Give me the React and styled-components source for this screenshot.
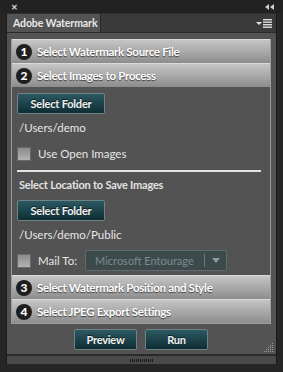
import React from "react";
import styled, { createGlobalStyle } from "styled-components";

const GlobalStyle = createGlobalStyle`
  html, body {
    margin: 0;
    padding: 0;
    background: #262626;
  }
  * {
    box-sizing: border-box;
  }
`;

const sections = [
  { num: 1, title: "Select Watermark Source File" },
  { num: 2, title: "Select Images to Process", open: true },
  { num: 3, title: "Select Watermark Position and Style" },
  { num: 4, title: "Select JPEG Export Settings" },
];

const App = () => {
  return (
    <StyledWindow>
      <GlobalStyle />
      <StyledTopBar>
        <StyledClose>✕</StyledClose>
        <svg width="9" height="6" viewBox="0 0 9 6">
          <polygon points="4,0 4,6 0,3" fill="#cfcfcf" />
          <polygon points="9,0 9,6 5,3" fill="#cfcfcf" />
        </svg>
      </StyledTopBar>
      <StyledFrame>
        <StyledTabRow>
          <StyledTab>Adobe Watermark</StyledTab>
          <StyledMenu>
            <svg width="16" height="9" viewBox="0 0 16 9">
              <polygon points="0,3 6,3 3,6" fill="#e0e0e0" />
              <rect x="7" y="0" width="9" height="1.4" fill="#e0e0e0" />
              <rect x="7" y="2.5" width="9" height="1.4" fill="#e0e0e0" />
              <rect x="7" y="5" width="9" height="1.4" fill="#e0e0e0" />
              <rect x="7" y="7.5" width="9" height="1.4" fill="#e0e0e0" />
            </svg>
          </StyledMenu>
        </StyledTabRow>
        <StyledContent>
          <StyledAccordion>
            {sections.map((s) => (
              <React.Fragment key={s.num}>
                <StyledHeader>
                  <StyledNumber>{s.num}</StyledNumber>
                  {s.title}
                </StyledHeader>
                {s.open ? (
                  <StyledSectionBody>
                    <StyledButton>Select Folder</StyledButton>
                    <StyledPath>/Users/demo</StyledPath>
                    <StyledCheckRow>
                      <StyledCheckbox />
                      <span>Use Open Images</span>
                    </StyledCheckRow>
                    <StyledDivider />
                    <StyledSubTitle>Select Location to Save Images</StyledSubTitle>
                    <StyledButton>Select Folder</StyledButton>
                    <StyledPath>/Users/demo/Public</StyledPath>
                    <StyledCheckRow mail>
                      <StyledCheckbox />
                      <span>Mail To:</span>
                      <StyledSelect>
                        <StyledSelectText>Microsoft Entourage</StyledSelectText>
                        <StyledSelectArrow>
                          <svg width="8" height="5" viewBox="0 0 8 5">
                            <polygon points="0,0 8,0 4,5" fill="#8e9a9c" />
                          </svg>
                        </StyledSelectArrow>
                      </StyledSelect>
                    </StyledCheckRow>
                  </StyledSectionBody>
                ) : null}
              </React.Fragment>
            ))}
          </StyledAccordion>
          <StyledActions>
            <StyledButton wide>Preview</StyledButton>
            <StyledButton wide>Run</StyledButton>
          </StyledActions>
          <StyledGrip>
            <svg width="10" height="10" viewBox="0 0 10 10">
              {[0, 1, 2, 3, 4].map((r) =>
                [0, 1, 2, 3, 4]
                  .filter((c) => c >= 4 - r)
                  .map((c) => (
                    <rect
                      key={`${r}-${c}`}
                      x={c * 2}
                      y={r * 2}
                      width="1"
                      height="1"
                      fill="#9a9a9a"
                    />
                  ))
              )}
            </svg>
          </StyledGrip>
        </StyledContent>
        <StyledBottomStrip>
          <svg width="24" height="3" viewBox="0 0 24 3">
            {Array.from({ length: 12 }).map((_, i) => (
              <rect key={i} x={i * 2} y="0" width="1" height="3" fill="#1a1a1a" />
            ))}
          </svg>
        </StyledBottomStrip>
      </StyledFrame>
    </StyledWindow>
  );
};

export default App;

const StyledWindow = styled.div`
  width: 283px;
  height: 372px;
  background: #262626;
  display: flex;
  flex-direction: column;
  font-family: Lato, "Liberation Sans", sans-serif;
  overflow: hidden;
`;

const StyledTopBar = styled.div`
  height: 13px;
  padding: 0 9px 0 11px;
  display: flex;
  align-items: center;
  justify-content: space-between;
  background: #222222;
`;

const StyledClose = styled.span`
  color: #d8d8d8;
  font-size: 8px;
  font-weight: 700;
  line-height: 1;
`;

const StyledFrame = styled.div`
  margin: 0 6px;
  display: flex;
  flex-direction: column;
  border-left: 1px solid #1b1b1b;
  border-right: 1px solid #1b1b1b;
`;

const StyledTabRow = styled.div`
  height: 20px;
  display: flex;
  align-items: stretch;
  justify-content: space-between;
  background: #3a3a3a;
  border-top: 1px solid #2e2e2e;
  border-bottom: 1px solid #2a2a2a;
`;

const StyledTab = styled.div`
  width: 94px;
  padding-left: 6px;
  display: flex;
  align-items: center;
  white-space: nowrap;
  background: #535353;
  color: #e8e8e8;
  font-size: 10.5px;
  font-weight: 700;
  letter-spacing: -0.1px;
  border-right: 1px solid #2a2a2a;
`;

const StyledMenu = styled.div`
  display: flex;
  align-items: center;
  padding-right: 4px;
`;

const StyledContent = styled.div`
  position: relative;
  height: 323px;
  background: #535353;
  padding: 6px 5px 0 4px;
  display: flex;
  flex-direction: column;
  border-bottom: 2px solid #2a2a2a;
`;

const StyledAccordion = styled.div`
  border: 1px solid #9c9c9c;
  border-top: none;
  display: flex;
  flex-direction: column;
`;

const StyledHeader = styled.div`
  height: 24px;
  display: flex;
  align-items: center;
  gap: 5px;
  padding-left: 4px;
  white-space: nowrap;
  background: linear-gradient(#c6c6c6, #8c8c8c);
  border-top: 1px solid #dadada;
  color: #ffffff;
  font-size: 11.5px;
  font-weight: 700;
  letter-spacing: -0.3px;
  text-shadow: 0 1px 1px rgba(0, 0, 0, 0.6);
`;

const StyledNumber = styled.span`
  width: 16px;
  height: 16px;
  border-radius: 50%;
  background: #1e1e1e;
  color: #ffffff;
  font-size: 12px;
  font-weight: 900;
  letter-spacing: 0;
  display: flex;
  align-items: center;
  justify-content: center;
  text-shadow: none;
`;

const StyledSectionBody = styled.div`
  display: flex;
  flex-direction: column;
  align-items: flex-start;
  padding: 6px 5px 4px 5px;
  background: #535353;
  color: #e6e6e6;
  font-size: 11.5px;
  line-height: 14px;
`;

const StyledButton = styled.button`
  height: 21px;
  width: ${(p) => (p.wide ? "63px" : "88px")};
  padding: 0;
  background: linear-gradient(#2c5963, #0e2d33);
  border: 1px solid #6f8385;
  border-radius: 2px;
  color: #f2f2f2;
  font-family: Lato, "Liberation Sans", sans-serif;
  font-size: 11px;
  font-weight: 700;
  letter-spacing: -0.2px;
  text-shadow: 0 -1px 0 rgba(0, 0, 0, 0.6);
`;

const StyledPath = styled.div`
  height: 20px;
  margin-top: 4px;
  padding-left: 2px;
  display: flex;
  align-items: center;
`;

const StyledCheckRow = styled.div`
  margin-top: ${(p) => (p.mail ? "5px" : "9px")};
  height: ${(p) => (p.mail ? "21px" : "14px")};
  display: flex;
  align-items: center;
  gap: 7px;
`;

const StyledCheckbox = styled.span`
  width: 14px;
  height: 14px;
  background: linear-gradient(#8a8a8a, #b4b4b4);
  border: 1px solid #6a6a6a;
`;

const StyledDivider = styled.div`
  align-self: stretch;
  margin: 9px 4px 0 0;
  height: 2px;
  background: #e4e4e4;
`;

const StyledSubTitle = styled.div`
  margin: 6px 0 8px 2px;
  font-weight: 700;
  font-size: 11px;
  letter-spacing: -0.2px;
  color: #e2e2e2;
`;

const StyledSelect = styled.div`
  margin-left: 1px;
  width: 142px;
  height: 21px;
  display: flex;
  align-items: stretch;
  background: #3c4a4c;
  border: 1px solid #5c6b6d;
  border-radius: 2px;
`;

const StyledSelectText = styled.span`
  flex: 1;
  padding-left: 9px;
  display: flex;
  align-items: center;
  color: #7f8b8d;
  font-size: 11px;
  border-right: 1px solid #6a7779;
  margin: 3px 0;
`;

const StyledSelectArrow = styled.span`
  width: 21px;
  display: flex;
  align-items: center;
  justify-content: center;
`;

const StyledActions = styled.div`
  display: flex;
  justify-content: center;
  gap: 8px;
  margin-top: 5px;
`;

const StyledGrip = styled.div`
  position: absolute;
  right: 2px;
  bottom: 1px;
  line-height: 0;
`;

const StyledBottomStrip = styled.div`
  height: 8px;
  background: #4a4a4a;
  display: flex;
  justify-content: center;
  align-items: center;
`;
